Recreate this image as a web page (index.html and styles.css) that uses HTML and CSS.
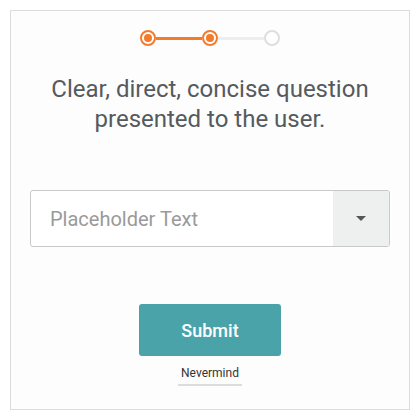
FILE: index.html
```html
<!DOCTYPE html>
<html>
<head>
<meta charset="utf-8">
<link rel="stylesheet" href="styles.css">
</head>
<body>
<div class="card">
  <div class="stepper">
    <span class="step done"></span>
    <span class="bar active"></span>
    <span class="step done"></span>
    <span class="bar"></span>
    <span class="step"></span>
  </div>
  <h1 class="question">Clear, direct, concise question<br>presented to the user.</h1>
  <div class="select">
    <div class="select-text">Placeholder Text</div>
    <div class="select-btn"><span class="caret"></span></div>
  </div>
  <button class="submit">Submit</button>
  <a class="nevermind">Nevermind</a>
</div>
</body>
</html>
```
FILE: styles.css
```css
html, body { margin: 0; padding: 0; background: #fff; }
body { font-family: Roboto, "Liberation Sans", sans-serif; }
.card {
  box-sizing: border-box;
  width: 400px;
  height: 400px;
  margin: 10px;
  border: 1px solid #dcdcdc;
  background: #fdfdfd;
  display: flex;
  flex-direction: column;
  align-items: center;
}
.stepper {
  display: flex;
  align-items: center;
  margin-top: 19px;
}
.step {
  box-sizing: border-box;
  width: 16px;
  height: 16px;
  border-radius: 50%;
  border: 2px solid #dedede;
  background: #fff;
  display: flex;
  align-items: center;
  justify-content: center;
}
.step.done { border-color: #f47b2b; }
.step.done::after {
  content: "";
  width: 8px;
  height: 8px;
  border-radius: 50%;
  background: #f47b2b;
}
.bar {
  width: 46px;
  height: 3px;
  background: #eceeef;
}
.bar.active { background: #f47b2b; }
.question {
  margin: 28px 0 0;
  font-size: 24px;
  line-height: 30px;
  font-weight: 400;
  color: #555a5e;
  text-align: center;
}
.select {
  box-sizing: border-box;
  margin-top: 56px;
  width: 360px;
  height: 57px;
  border: 1px solid #c9c9c9;
  border-radius: 3px;
  background: #fff;
  display: flex;
  overflow: hidden;
}
.select-text {
  flex: 1;
  display: flex;
  align-items: center;
  padding-left: 19px;
  font-size: 20px;
  color: #9a9a9a;
}
.select-btn {
  width: 56px;
  background: #eef0f0;
  display: flex;
  align-items: center;
  justify-content: center;
}
.caret {
  width: 0;
  height: 0;
  border-left: 5px solid transparent;
  border-right: 5px solid transparent;
  border-top: 5px solid #555;
}
.submit {
  margin-top: 57px;
  width: 142px;
  height: 52px;
  border: none;
  border-radius: 3px;
  background: #4aa3a9;
  color: #fff;
  font-family: Roboto, "Liberation Sans", sans-serif;
  font-size: 18px;
  font-weight: 500;
}
.nevermind {
  margin-top: 9px;
  font-size: 12px;
  color: #333;
  padding: 0 3px 3px;
  border-bottom: 2px solid #ddd;
  line-height: 16px;
}
```
